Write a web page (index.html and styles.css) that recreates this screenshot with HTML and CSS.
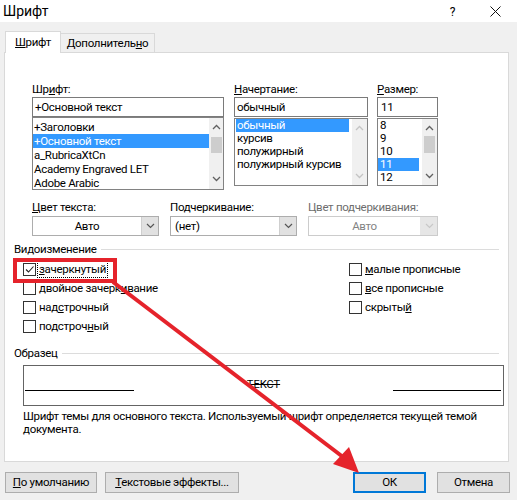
FILE: index.html
```html
<!DOCTYPE html>
<html lang="ru">
<head>
<meta charset="utf-8">
<title>Шрифт</title>
<link rel="stylesheet" href="styles.css">
</head>
<body>
<div class="dialog">
  <div class="titlebar">
    <span class="title">Шрифт</span>
    <span class="help">?</span>
    <svg class="close" width="11" height="11" viewBox="0 0 11 11"><path d="M0.5 0.5 L10.5 10.5 M10.5 0.5 L0.5 10.5" stroke="#111" stroke-width="1" fill="none"/></svg>
  </div>

  <div class="tabs">
    <div class="tab active"><u>Ш</u>рифт</div>
    <div class="tab second">Дополнитель<u>н</u>о</div>
  </div>

  <div class="panel">
    <div class="fontrow">
      <div class="col c1">
        <div class="lbl">Шр<u>и</u>фт:</div>
        <div class="input">+Основной текст</div>
        <div class="list flist">
          <div class="items">
            <div class="item">+Заголовки</div>
            <div class="item sel">+Основной текст</div>
            <div class="item">a_RubricaXtCn</div>
            <div class="item">Academy Engraved LET</div>
            <div class="item">Adobe Arabic</div>
          </div>
          <div class="sb">
            <div class="arr up"><svg width="9" height="6" viewBox="0 0 9 6"><path d="M1 5 L4.5 1.5 L8 5" stroke="#606060" stroke-width="1.3" fill="none"/></svg></div>
            <div class="thumb"></div>
            <div class="fill"></div>
            <div class="arr down"><svg width="9" height="6" viewBox="0 0 9 6"><path d="M1 1 L4.5 4.5 L8 1" stroke="#606060" stroke-width="1.3" fill="none"/></svg></div>
          </div>
        </div>
      </div>
      <div class="col c2">
        <div class="lbl"><u>Н</u>ачертание:</div>
        <div class="input">обычный</div>
        <div class="list slist">
          <div class="items">
            <div class="item sel">обычный</div>
            <div class="item">курсив</div>
            <div class="item">полужирный</div>
            <div class="item">полужирный курсив</div>
          </div>
          <div class="sb disabled">
            <div class="arr up"><svg width="9" height="6" viewBox="0 0 9 6"><path d="M1 5 L4.5 1.5 L8 5" stroke="#c4c4c4" stroke-width="1.3" fill="none"/></svg></div>
            <div class="fill"></div>
            <div class="arr down"><svg width="9" height="6" viewBox="0 0 9 6"><path d="M1 1 L4.5 4.5 L8 1" stroke="#c4c4c4" stroke-width="1.3" fill="none"/></svg></div>
          </div>
        </div>
      </div>
      <div class="col c3">
        <div class="lbl"><u>Р</u>азмер:</div>
        <div class="input sz">11</div>
        <div class="list slist">
          <div class="items">
            <div class="item sz">8</div>
            <div class="item sz">9</div>
            <div class="item sz">10</div>
            <div class="item sz sel">11</div>
            <div class="item sz">12</div>
          </div>
          <div class="sb">
            <div class="arr up"><svg width="9" height="6" viewBox="0 0 9 6"><path d="M1 5 L4.5 1.5 L8 5" stroke="#606060" stroke-width="1.3" fill="none"/></svg></div>
            <div class="thumb"></div>
            <div class="fill"></div>
            <div class="arr down"><svg width="9" height="6" viewBox="0 0 9 6"><path d="M1 1 L4.5 4.5 L8 1" stroke="#606060" stroke-width="1.3" fill="none"/></svg></div>
          </div>
        </div>
      </div>
    </div>

    <div class="ddrow">
      <div class="dd d1">
        <div class="lbl2"><u>Ц</u>вет текста:</div>
        <div class="combo">
          <span class="cval center">Авто</span>
          <span class="cbtn"><svg width="9" height="6" viewBox="0 0 9 6"><path d="M1 1 L4.5 4.5 L8 1" stroke="#555" stroke-width="1.2" fill="none"/></svg></span>
        </div>
      </div>
      <div class="dd d2">
        <div class="lbl2">Подчеркивание:</div>
        <div class="combo">
          <span class="cval">(нет)</span>
          <span class="cbtn"><svg width="9" height="6" viewBox="0 0 9 6"><path d="M1 1 L4.5 4.5 L8 1" stroke="#555" stroke-width="1.2" fill="none"/></svg></span>
        </div>
      </div>
      <div class="dd d3">
        <div class="lbl2 dis">Цвет подчеркивания:</div>
        <div class="combo disabled">
          <span class="cval center">Авто</span>
          <span class="cbtn"><svg width="9" height="6" viewBox="0 0 9 6"><path d="M1 1 L4.5 4.5 L8 1" stroke="#c8c8c8" stroke-width="1.2" fill="none"/></svg></span>
        </div>
      </div>
    </div>

    <div class="group">Видоизменение</div>
    <div class="checks">
      <div class="chk"><span class="box"><svg width="11" height="11" viewBox="0 0 11 11"><path d="M2 5.5 L4.5 8 L9.5 2.5" stroke="#222" stroke-width="1.1" fill="none"/></svg></span><span class="ctext focus"><u>з</u>ачеркнутый</span></div>
      <div class="chk"><span class="box"></span><span class="ctext"><u>м</u>алые прописные</span></div>
      <div class="chk"><span class="box"></span><span class="ctext">двойное зачерк<u>и</u>вание</span></div>
      <div class="chk"><span class="box"></span><span class="ctext"><u>в</u>се прописные</span></div>
      <div class="chk"><span class="box"></span><span class="ctext">над<u>с</u>трочный</span></div>
      <div class="chk"><span class="box"></span><span class="ctext">скрыты<u>й</u></span></div>
      <div class="chk"><span class="box"></span><span class="ctext">подстроч<u>н</u>ый</span></div>
    </div>

    <div class="group g2">Образец</div>
    <div class="sample">
      <span class="sline left"></span>
      <span class="stext">ТЕКСТ</span>
      <span class="sline right"></span>
    </div>
    <div class="desc">Шрифт темы для основного текста. Используемый шрифт определяется текущей темой<br>документа.</div>
  </div>

  <div class="buttons">
    <div class="btn b1"><u>П</u>о умолчанию</div>
    <div class="btn b2"><u>Т</u>екстовые эффекты...</div>
    <div class="btn ok">ОК</div>
    <div class="btn cancel">Отмена</div>
  </div>

  <svg class="overlay" width="517" height="500" viewBox="0 0 517 500">
    <rect x="15" y="260" width="100" height="21" fill="none" stroke="#e5232b" stroke-width="4"/>
    <line x1="113" y1="282" x2="343" y2="457" stroke="#e5232b" stroke-width="4"/>
    <polygon points="333,464 349,447 359,473" fill="#e5232b"/>
  </svg>
</div>
</body>
</html>
```

FILE: styles.css
```css
html, body {
  margin: 0;
  padding: 0;
}
body {
  width: 517px;
  height: 500px;
  overflow: hidden;
  background: #f0f0f0;
  font-family: Roboto, "Noto Sans", sans-serif;
  font-size: 11.5px;
  letter-spacing: -0.3px;
  color: #000;
}
u {
  text-decoration: underline;
  text-underline-offset: 1px;
}
.dialog {
  position: relative;
  width: 517px;
  height: 500px;
}

/* title bar */
.titlebar {
  height: 22px;
  background: #fff;
  display: flex;
  align-items: center;
}
.title {
  margin-left: 3px;
  font-size: 14px;
  letter-spacing: 0;
  line-height: 20px;
  flex: 1;
}
.help {
  font-size: 12px;
  line-height: 16px;
  margin-right: 35px;
  margin-top: 1px;
}
.close {
  margin-right: 16px;
  margin-top: 1px;
}

/* tabs */
.tabs {
  display: flex;
  align-items: flex-end;
  height: 21px;
  margin-top: 9px;
  padding-left: 5px;
}
.tab {
  box-sizing: border-box;
  height: 19px;
  border: 1px solid #d9d9d9;
  border-bottom: none;
  background: #f0f0f0;
  line-height: 18px;
  text-align: center;
}
.tab.active {
  width: 56px;
  height: 22px;
  line-height: 20px;
  background: #fff;
  margin-bottom: -1px;
  position: relative;
  z-index: 1;
}
.tab.second {
  width: 95px;
  margin-left: -1px;
}

/* panel */
.panel {
  margin-left: 4px;
  width: 505px;
  height: 410px;
  box-sizing: border-box;
  border: 1px solid #d9d9d9;
  background: #fff;
  padding: 28px 9px 0;
}
.fontrow {
  display: flex;
  margin-left: 18px;
}
.c1 { width: 192px; margin-right: 10px; }
.c2 { width: 134px; margin-right: 9px; }
.c3 { width: 61px; }
.lbl {
  height: 16px;
  line-height: 16px;
}
.input {
  box-sizing: border-box;
  height: 20px;
  border: 1px solid #7a7a7a;
  line-height: 18px;
  padding-left: 2px;
  white-space: nowrap;
}
.input.sz { padding-left: 3px; }
.list {
  box-sizing: border-box;
  border: 1px solid #828282;
  display: flex;
  overflow: hidden;
}
.flist {
  height: 73px;
}
.slist {
  height: 68px;
  margin-top: 1px;
}
.items {
  flex: 1;
  min-width: 0;
  padding-top: 2px;
}
.flist .item {
  height: 14px;
  line-height: 14px;
  padding-left: 1px;
}
.slist .items { padding-top: 0; margin-right: 3px; }
.slist .item {
  height: 13px;
  line-height: 13px;
  padding-left: 1px;
  margin-left: 1px;
  white-space: nowrap;
}
.slist .item.sz { padding-left: 2px; margin-left: 0; }
.item.sel {
  background: #3399ff;
  color: #fff;
}
.sb {
  width: 15px;
  background: #f0f0f0;
  display: flex;
  flex-direction: column;
  align-items: center;
}
.flist .sb { width: 14px; }
.arr {
  height: 17px;
  width: 100%;
  display: flex;
  align-items: center;
  justify-content: center;
}
.arr.up { height: 18px; }
.arr.down { margin-bottom: 2px; }
.slist .arr.down { margin-bottom: 1px; }
.thumb {
  width: 11px;
  height: 16px;
  margin-top: 1px;
  background: #cdcdcd;
}
.slist .thumb { margin-top: -1px; height: 17px; }
.fill { flex: 1; }

/* dropdowns */
.ddrow {
  display: flex;
  margin-left: 18px;
  margin-top: 9px;
}
.dd { width: 127px; margin-right: 11px; }
.dd.d3 { width: 130px; margin-right: 0; }
.lbl2 {
  height: 17px;
  line-height: 16px;
}
.lbl2.dis { color: #6d6d6d; }
.combo {
  box-sizing: border-box;
  height: 20px;
  border: 1px solid #adadad;
  background: #fff;
  display: flex;
}
.cval {
  flex: 1;
  line-height: 18px;
  padding-left: 4px;
}
.cval.center {
  text-align: center;
  padding-left: 0;
}
.cbtn {
  width: 16px;
  background: #e1e1e1;
  border-left: 1px solid #cfcfcf;
  display: flex;
  align-items: center;
  justify-content: center;
}
.combo.disabled {
  border-color: #cccccc;
  color: #838383;
}
.combo.disabled .cbtn {
  background: #e6e6e6;
  border-left-color: #e6e6e6;
}

/* groups */
.group {
  display: flex;
  align-items: center;
  height: 16px;
  line-height: 16px;
  margin-top: 5px;
}
.group::after {
  content: "";
  flex: 1;
  height: 1px;
  background: #dcdcdc;
  margin-left: 4px;
}
.group.g2 {
  margin-top: 9px;
}

/* checkboxes */
.checks {
  display: grid;
  grid-template-columns: 326px 1fr;
  grid-auto-rows: 19px;
  margin-left: 9px;
  margin-top: 3px;
  height: 76px;
}
.chk {
  display: flex;
  align-items: center;
}
.box {
  box-sizing: border-box;
  width: 13px;
  height: 13px;
  border: 1px solid #333;
  background: #fff;
  display: flex;
  align-items: center;
  justify-content: center;
}
.ctext {
  margin-left: 2px;
  padding: 0 1px;
  line-height: 15px;
  white-space: nowrap;
}
.ctext.focus {
  outline: 1px dotted #000;
  outline-offset: 0;
}

/* sample */
.sample {
  box-sizing: border-box;
  width: 481px;
  height: 41px;
  margin-left: 9px;
  margin-top: 4px;
  border: 1px solid #646464;
  display: flex;
  align-items: flex-start;
}
.sline {
  height: 1px;
  background: #000;
  margin-top: 24px;
}
.sline.left { width: 109px; margin-left: 1px; }
.sline.right { width: 108px; margin-right: 2px; }
.stext {
  flex: 1;
  text-align: center;
  font-size: 11px;
  letter-spacing: 0;
  line-height: 14px;
  margin-top: 12px;
  color: #000;
  text-decoration: line-through;
}
.desc {
  margin-left: 9px;
  margin-top: 4px;
  line-height: 13px;
  white-space: nowrap;
}

/* buttons */
.buttons {
  display: flex;
  margin-top: 10px;
  padding-left: 5px;
  padding-right: 7px;
}
.btn {
  box-sizing: border-box;
  height: 21px;
  border: 1px solid #adadad;
  background: #e1e1e1;
  line-height: 19px;
  text-align: center;
  white-space: nowrap;
}
.b1 { width: 92px; }
.b2 { width: 134px; margin-left: 8px; }
.ok {
  width: 73px;
  margin-left: auto;
  border: 2px solid #0078d7;
  line-height: 17px;
}
.cancel { width: 73px; margin-left: 11px; }

.overlay {
  position: absolute;
  left: 0;
  top: 0;
  z-index: 5;
  pointer-events: none;
}
```
